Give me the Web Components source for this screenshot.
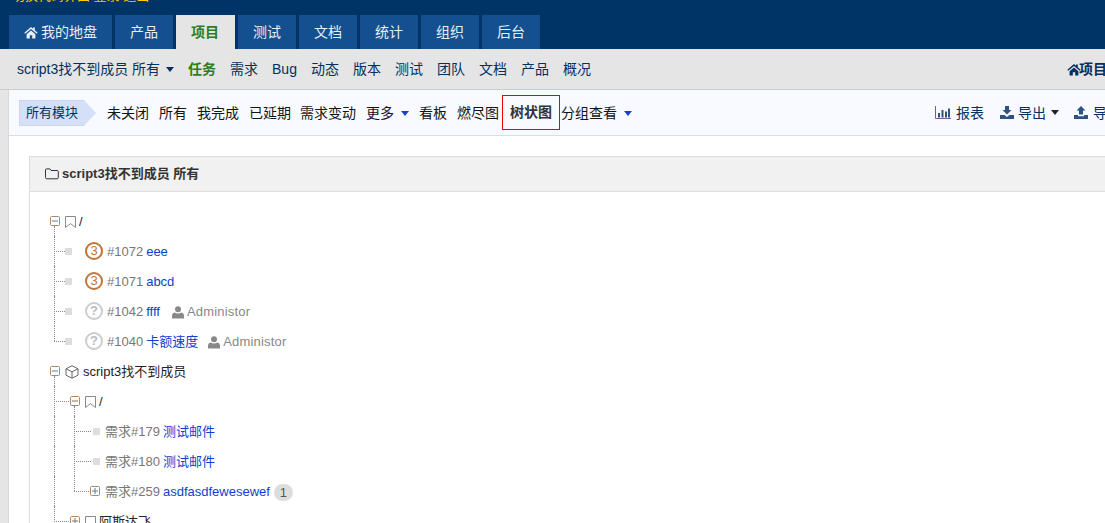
<!DOCTYPE html>
<html>
<head>
<meta charset="utf-8">
<style>
  html, body { margin: 0; padding: 0; height: 523px; overflow: hidden; background: #e5e5e5; }
  body { font: 14px/20px "Liberation Sans", "Noto Sans CJK SC", sans-serif; color: #141414; }
</style>
</head>
<body>
<app-header></app-header>
<sub-nav></sub-nav>
<page-main>
  <feature-bar></feature-bar>
  <tree-panel></tree-panel>
</page-main>

<script>
// shared icons, dropped into the shadow roots below
const ICONS = {
  home: '<svg width="14" height="13" viewBox="0 0 14 13"><path fill="currentColor" d="M7 1 0.3 6.8l.9 1L7 2.9l5.8 4.9.9-1L10.8 4.300V1.400H9v1.400zM2.600 8.200V12.600h3.200V9.200h2.400v3.400h3.200V8.200L7 4.400z"/></svg>',
  folder: '<svg width="14" height="12" viewBox="0 0 14 12"><path fill="none" stroke="currentColor" d="M1.500.9h3.400l1.200 1.600h6q1.200 0 1.200 1.200v5.900q0 1.200-1.200 1.200H1.700q-1.200 0-1.200-1.200V1.900q0-1 1-1z"/></svg>',
  bookmark: '<svg width="11" height="12" viewBox="0 0 11 12"><path fill="none" stroke="#888" d="M.5.500h10v11L5.500 7.600.5 11.500z"/></svg>',
  box: '<svg width="14" height="14" viewBox="0 0 14 14"><path fill="none" stroke="#666" d="M7 .8l6 3v6.400l-6 3-6-3V3.800zM1 3.800l6 3 6-3M7 6.800V13.200"/></svg>',
  user: '<svg width="12" height="13" viewBox="0 0 12 13"><circle cx="6" cy="3.300" r="3" fill="currentColor"/><path fill="currentColor" d="M0 12.500V9.500Q0 7 2.500 6.500Q6 8.500 9.500 6.500Q12 7 12 9.500V12.500z"/></svg>',
  chart: '<svg width="16" height="13" viewBox="0 0 16 13"><path fill="none" stroke="#7a5a9a" d="M.5 0V12.500H16"/><path fill="#2d5480" d="M3 7h2v4.500H3zM6.500 4h2v7.500h-2zM10 5.500h2v6h-2zM13 2.500h2v9h-2z"/></svg>',
  down: '<svg width="14" height="13" viewBox="0 0 14 13"><path fill="#2d5480" d="M5 0h4v4h2.500L7 8.500 2.500 4H5zM0 9h4.500L7 11l2.500-2H14v4H0z"/></svg>',
  up: '<svg width="14" height="13" viewBox="0 0 14 13"><path fill="#2d5480" d="M7 0l4.500 4.500H9V8.500H5V4.500H2.500zM0 9h4v1.200h6V9h4v4H0z"/></svg>'
};

class AppHeader extends HTMLElement {
  constructor() {
    super();
    const shadow = this.attachShadow({mode: 'open'});
    const tabs = ['产品','项目','测试','文档','统计','组织','后台'];
    shadow.innerHTML = `
    <style>
      :host { display: block; height: 49px; background: #003366; overflow: hidden; }
      .top { height: 27px; margin-top: -12px; padding-left: 12px; color: #ffcc00; font-size: 13px; line-height: 15px; white-space: nowrap; }
      ul { display: flex; gap: 3px; margin: 0; padding: 0 0 0 9px; list-style: none; }
      li { height: 34px; line-height: 34px; font-size: 14px; padding: 0 15px; background: #14508f; color: #e6eef6; white-space: nowrap; display: flex; align-items: center; gap: 3px; }
      li.on { background: #e5e5e5; color: #2e7d1e; font-weight: bold; padding: 0 16px 0 15px; }
    </style>
    <div class="top">切换代码界面 登录/退出</div>
    <ul>
      <li>${ICONS.home}我的地盘</li>
      ${tabs.map(t => `<li class="${t == '项目' ? 'on' : ''}">${t}</li>`).join('')}
    </ul>`;
  }
}

class SubNav extends HTMLElement {
  constructor() {
    super();
    const shadow = this.attachShadow({mode: 'open'});
    const links = ['需求','Bug','动态','版本','测试','团队','文档','产品','概况'];
    shadow.innerHTML = `
    <style>
      :host { display: flex; height: 41px; align-items: center; background: #e5e5e5; color: #03305f; padding: 0 0 0 17px; box-sizing: border-box; border-bottom: 1px solid #ccc; white-space: nowrap; overflow: hidden; }
      .name { margin-right: 14px; }
      .caret { display: inline-block; border: 4px solid transparent; border-top: 5px solid #03305f; border-bottom: 0; margin: 0 0 2px 2px; vertical-align: middle; }
      .links { display: flex; gap: 14px; flex: 1; }
      b { color: #2e7d1e; }
      .right { display: flex; align-items: center; font-weight: bold; width: 38px; flex: none; overflow: hidden; }
      .right svg { flex: none; margin-right: -2px; }
    </style>
    <span class="name">script3找不到成员 所有 <i class="caret"></i></span>
    <div class="links"><b>任务</b>${links.map(l => `<span>${l}</span>`).join('')}</div>
    <span class="right">${ICONS.home}项目</span>`;
  }
}

// white area under the nav, holds the bar and the panel
class PageMain extends HTMLElement {
  constructor() {
    super();
    const shadow = this.attachShadow({mode: 'open'});
    shadow.innerHTML = `
    <style>
      :host { display: block; margin-left: 8px; height: 433px; background: #fff; border-left: 1px solid #d8d8d8; overflow: hidden; }
    </style>
    <slot></slot>`;
  }
}

class FeatureBar extends HTMLElement {
  constructor() {
    super();
    const shadow = this.attachShadow({mode: 'open'});
    shadow.innerHTML = `
    <style>
      :host { display: flex; height: 46px; align-items: center; background: #f8faff; box-sizing: border-box; padding-left: 10px; border-bottom: 1px solid #ddd; white-space: nowrap; overflow: hidden; }
      .mod { position: relative; height: 26px; line-height: 24px; box-sizing: border-box; padding: 0 6px; font-size: 13px; color: #03305f; background: #d3e0f7; border: 1px solid #c8d6ef; border-right: 0; margin-right: 23px; flex: none; }
      .mod::after { content: ""; position: absolute; left: 100%; top: -1px; border: 13px solid transparent; border-left: 12px solid #d3e0f7; border-right: 0; }
      .links { display: flex; align-items: center; flex: 1; }
      .links span { margin-right: 10px; }
      .links span.tight { margin-right: 9px; }
      .caret { display: inline-block; border: 4px solid transparent; border-top: 5px solid #1a3fcc; border-bottom: 0; margin-left: 3px; vertical-align: middle; }
      .links span.active { box-sizing: border-box; height: 35px; line-height: 33px; width: 58px; text-align: center; border: 1px solid #f00000; font-weight: bold; color: #333; margin: 0 1px 0 -7px; }
      .right { display: flex; align-items: center; color: #03305f; flex: none; width: 170px; overflow: hidden; }
      .right span { display: flex; align-items: center; flex: none; }
      .right svg { flex: none; margin-right: 5px; }
      .right .exp { margin-left: 16px; }
      .right .exp svg { margin-right: 4px; }
      .right .imp { margin-left: 15px; }
      .dark { border: 4px solid transparent; border-top: 5px solid #222; border-bottom: 0; margin-left: 5px; }
    </style>
    <div class="mod">所有模块</div>
    <div class="links">
      <span>未关闭</span><span>所有</span><span>我完成</span><span class="tight">已延期</span><span>需求变动</span>
      <span>更多 <i class="caret"></i></span><span>看板</span><span>燃尽图</span>
      <span class="active">树状图</span><span>分组查看 <i class="caret"></i></span>
    </div>
    <div class="right">
      <span>${ICONS.chart}报表</span>
      <span class="exp">${ICONS.down}导出<i class="dark"></i></span>
      <span class="imp">${ICONS.up}导入</span>
    </div>`;
  }
}

class TreePanel extends HTMLElement {
  constructor() {
    super();
    const shadow = this.attachShadow({mode: 'open'});
    shadow.innerHTML = `
    <style>
      :host { display: block; margin: 20px -20px 0 20px; border: 1px solid #ddd; height: 400px; box-sizing: border-box; }
      header { height: 34px; background: #f1f1f1; border-bottom: 1px solid #ddd; padding-left: 15px; display: flex; align-items: center; gap: 3px; font-size: 13px; font-weight: bold; color: #333; }
      .tree { padding: 14px 0 0 20px; }
      .dir { display: flex; align-items: center; gap: 3px; }
      .dir.box { gap: 4px; }
    </style>
    <header>${ICONS.folder}script3找不到成员 所有</header>
    <div class="tree">
      <tree-row toggle="minus" depth="0" down><span class="dir">${ICONS.bookmark}/</span></tree-row>
      <tree-row depth="1" pri="3" id-text="#1072" link="eee" trunk></tree-row>
      <tree-row depth="1" pri="3" id-text="#1071" link="abcd" trunk></tree-row>
      <tree-row depth="1" pri="?" id-text="#1042" link="ffff" user="Administor" user-gap="12" trunk></tree-row>
      <tree-row depth="1" pri="?" id-text="#1040" link="卡额速度" user="Administor" last></tree-row>
      <tree-row toggle="minus" depth="0" down><span class="dir box">${ICONS.box}script3找不到成员</span></tree-row>
      <tree-row toggle="minus" depth="1" down trunk><span class="dir">${ICONS.bookmark}/</span></tree-row>
      <tree-row depth="2" id-text="需求#179" link="测试邮件" trunk outer></tree-row>
      <tree-row depth="2" id-text="需求#180" link="测试邮件" trunk outer></tree-row>
      <tree-row depth="2" toggle="plus" id-text="需求#259" link="asdfasdfewesewef" badge="1" last outer></tree-row>
      <tree-row toggle="plus" depth="1" trunk><span class="dir">${ICONS.bookmark}阿斯达飞</span></tree-row>
    </div>`;
  }
}

// one row of the tree, connectors are drawn with absolute dotted spans
class TreeRow extends HTMLElement {
  constructor() {
    super();
    this.attachShadow({mode: 'open'});
  }
  connectedCallback() {
    const a = n => this.getAttribute(n);
    const has = n => this.hasAttribute(n);
    const depth = +a('depth');
    // x of the vertical line this row hangs from, relative to the row
    const lineX = depth == 0 ? -1 : (depth - 1) * 20 + 4;
    const toggleX = depth * 20;
    let lines = '';
    if (depth > 0) {
      lines += `<i class="v" style="left:${lineX}px;top:0;height:${has('last') ? 15 : 30}px"></i>`;
      lines += `<i class="h" style="left:${lineX}px;width:${depth == 1 && !a('toggle') ? 11 : 17}px"></i>`;
    }
    if (has('outer')) lines += `<i class="v" style="left:4px;top:0;height:30px"></i>`;
    if (has('down')) lines += `<i class="v" style="left:${toggleX + 4}px;top:20px;height:10px"></i>`;

    let mark;
    if (a('toggle')) {
      mark = `<svg class="tg" style="margin-left:${toggleX}px" width="10" height="10" viewBox="0 0 10 10"><rect x=".5" y=".5" width="9" height="9" rx="1" fill="#fff" stroke="#b08a68"/><path d="M2 5h6${a('toggle') == 'plus' ? 'M5 2v6' : ''}" stroke="#777"/></svg>`;
    } else {
      const x = depth == 2 ? 43 : 15;
      mark = `<i class="sq" style="margin-left:${x}px;margin-right:${depth == 2 ? 5 : 13}px"></i>`;
    }
    const pri = a('pri') ? `<i class="pri ${a('pri') == '?' ? 'q' : ''}">${a('pri')}</i>` : '';
    const user = a('user') ? `<span class="user" style="margin-left:${a('user-gap') || 10}px">${ICONS.user}${a('user')}</span>` : '';
    const badge = a('badge') ? `<i class="badge">${a('badge')}</i>` : '';
    const body = a('link')
      ? `${pri}<span class="id">${a('id-text')}</span><a>${a('link')}</a>${user}${badge}`
      : '<slot></slot>';
    this.shadowRoot.innerHTML = `
    <style>
      :host { display: flex; position: relative; align-items: center; height: 30px; font-size: 13px; white-space: nowrap; color: #222; }
      .v { position: absolute; width: 0; border-left: 1px dotted #888; }
      .h { position: absolute; top: 15px; height: 0; border-top: 1px dotted #888; }
      .tg { position: relative; margin-right: 5px; flex: none; }
      .sq { position: relative; width: 7px; height: 7px; background: #ddd; flex: none; }
      .pri { box-sizing: border-box; width: 18px; height: 18px; border: 2px solid #c0763a; color: #c0763a; border-radius: 50%; text-align: center; line-height: 14px; font-style: normal; margin-right: 4px; flex: none; }
      .pri.q { border-color: #ccc; color: #bbb; font-weight: bold; }
      .id, a, .user, .badge, ::slotted(*) { margin-top: 2px; }
      .id { color: #777; margin-right: 3px; }
      a { color: #0c3fd0; }
      .user { display: inline-flex; align-items: center; gap: 3px; color: #888; letter-spacing: .2px; }
      .user svg { flex: none; }
      .badge { background: #ddd; border-radius: 9px; width: 19px; text-align: center; margin-left: 4px; font-style: normal; color: #555; line-height: 17px; }
    </style>
    ${lines}${mark}${body}`;
  }
}

customElements.define('app-header', AppHeader);
customElements.define('sub-nav', SubNav);
customElements.define('page-main', PageMain);
customElements.define('feature-bar', FeatureBar);
customElements.define('tree-panel', TreePanel);
customElements.define('tree-row', TreeRow);
</script>
</body>
</html>
